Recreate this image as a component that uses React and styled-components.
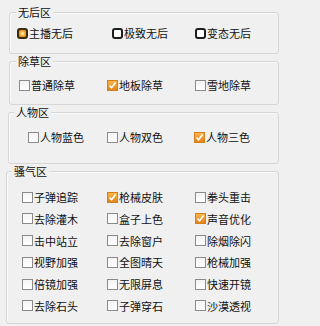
import React, { useState } from 'react';
import styled, { createGlobalStyle, css } from 'styled-components';

const GlobalStyle = createGlobalStyle`
  html, body {
    margin: 0;
    padding: 0;
    background: #f0f0f0;
  }
  body {
    font-family: "Noto Sans CJK SC", "Noto Sans", sans-serif;
    font-size: 11px;
    color: #111;
  }
`;

const Page = styled.div`
  width: 283px;
  height: 326px;
  box-sizing: border-box;
  padding-top: 12px;
  display: flex;
  flex-direction: column;
  gap: 7px;
  background: #f0f0f0;
`;

const Group = styled.div`
  position: relative;
  box-sizing: border-box;
  height: ${({ height }) => height}px;
  margin-left: ${({ left }) => left}px;
  margin-right: 4px;
  padding-top: ${({ top }) => top}px;
  padding-left: ${({ indent }) => indent}px;
  border: 1px solid #d6d6d6;
  border-radius: 3px;
  box-shadow: inset 1px 1px 0 #fbfbfb;
`;

const Legend = styled.span`
  position: absolute;
  top: -8px;
  left: ${({ offset }) => offset}px;
  padding: 0 2px;
  background: #f0f0f0;
  line-height: 14px;
  white-space: nowrap;
`;

const Grid = styled.div`
  display: grid;
  grid-template-columns: ${({ cols }) => cols};
  row-gap: 7.8px;
`;

const Option = styled.label`
  display: flex;
  align-items: center;
  gap: 1px;
  height: 14px;
  line-height: 14px;
  white-space: nowrap;
  cursor: default;
  user-select: none;
`;

const Box = styled.span`
  display: inline-flex;
  align-items: center;
  justify-content: center;
  box-sizing: border-box;
  width: 11px;
  height: 11px;
  flex: none;
  border: 1px solid #8a8a8a;
  background: linear-gradient(#f4f4f4, #ffffff);
  ${({ checked }) =>
    checked &&
    css`
      border-color: #d4801c;
      background: linear-gradient(#f9b548, #e4841a);
    `}
`;

const RadioBox = styled.span`
  display: inline-block;
  box-sizing: border-box;
  width: 11px;
  height: 11px;
  flex: none;
  border: 2px solid #1e1e1e;
  border-radius: 3px;
  background: #ffffff;
  ${({ checked }) =>
    checked &&
    css`
      border-color: #3a2a10;
      background: radial-gradient(circle at 50% 50%, #fff1c0 0, #fbc14e 35%, #e38a1c 75%, #c86f10 100%);
    `}
`;

const Check = () => (
  <svg width="9" height="9" viewBox="0 0 9 9">
    <path d="M1.5 4.6 L3.6 6.8 L7.6 1.6" fill="none" stroke="#fff" strokeWidth="1.6" />
  </svg>
);

const groups = [
  {
    title: '无后区',
    radio: true,
    height: 42,
    left: 9,
    top: 13,
    indent: 7,
    legend: 6,
    cols: '95px 83px auto',
    items: ['主播无后', '极致无后', '变态无后'],
    initial: ['主播无后'],
  },
  {
    title: '除草区',
    height: 44,
    left: 9,
    top: 16,
    indent: 9,
    legend: 6,
    cols: '88px 88px auto',
    items: ['普通除草', '地板除草', '雪地除草'],
    initial: ['地板除草'],
  },
  {
    title: '人物区',
    height: 52,
    left: 8,
    top: 17,
    indent: 19,
    legend: 5,
    cols: '79px 87px auto',
    items: ['人物蓝色', '人物双色', '人物三色'],
    initial: ['人物三色'],
  },
  {
    title: '骚气区',
    height: 153,
    left: 6,
    top: 18,
    indent: 15,
    legend: 5,
    cols: '85px 88px auto',
    items: [
      '子弹追踪', '枪械皮肤', '拳头重击',
      '去除灌木', '盒子上色', '声音优化',
      '击中站立', '去除窗户', '除烟除闪',
      '视野加强', '全图晴天', '枪械加强',
      '倍镜加强', '无限屏息', '快速开镜',
      '去除石头', '子弹穿石', '沙漠透视',
    ],
    initial: ['枪械皮肤', '声音优化'],
  },
];

const OptionGroup = ({ group }) => {
  const [selected, setSelected] = useState(group.initial);

  const toggle = name => {
    if (group.radio) {
      setSelected([name]);
      return;
    }
    setSelected(selected.includes(name) ? selected.filter(s => s !== name) : [...selected, name]);
  };

  return (
    <Group height={group.height} left={group.left} top={group.top} indent={group.indent}>
      <Legend offset={group.legend}>{group.title}</Legend>
      <Grid cols={group.cols}>
        {group.items.map(name => {
          const on = selected.includes(name);
          return (
            <Option key={name} onClick={() => toggle(name)}>
              {group.radio ? (
                <RadioBox checked={on} />
              ) : (
                <Box checked={on}>{on && <Check />}</Box>
              )}
              {name}
            </Option>
          );
        })}
      </Grid>
    </Group>
  );
};

const App = () => (
  <>
    <GlobalStyle />
    <Page>
      {groups.map(group => (
        <OptionGroup key={group.title} group={group} />
      ))}
    </Page>
  </>
);

export default App;
